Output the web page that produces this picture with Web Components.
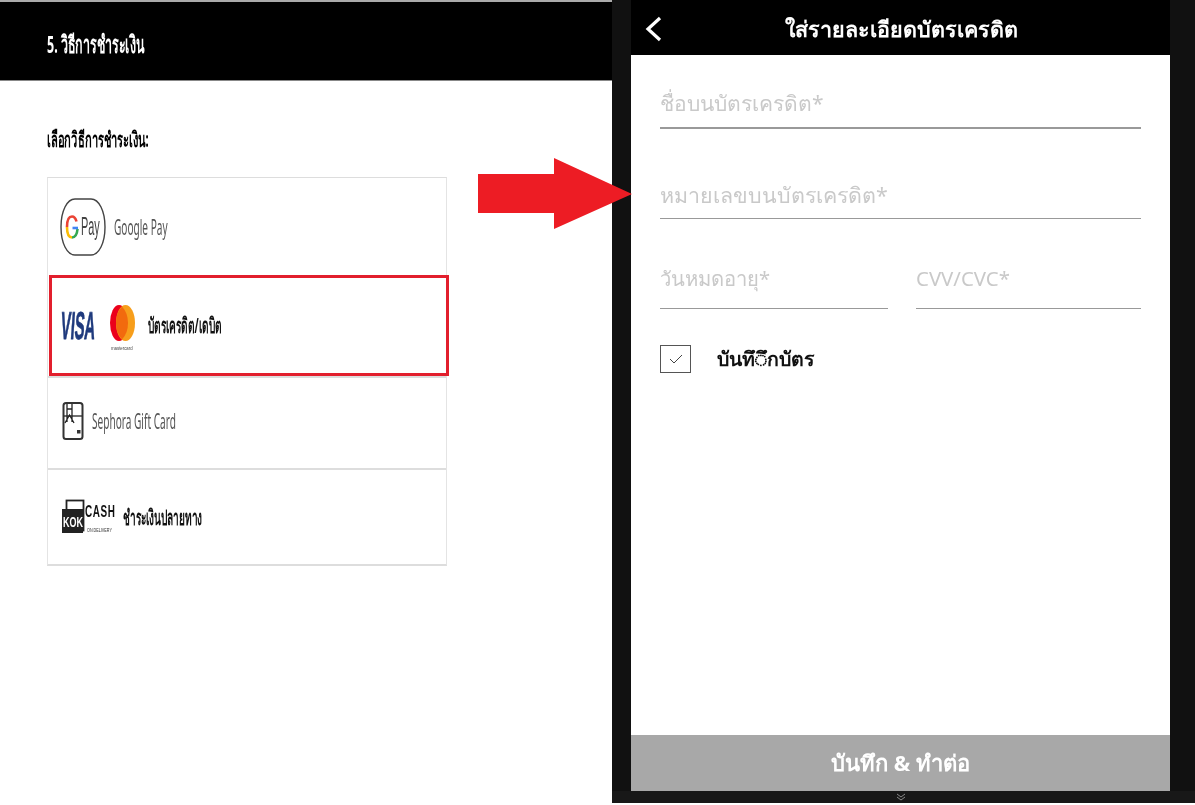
<!DOCTYPE html>
<html lang="th">
<head>
<meta charset="utf-8">
<title>Payment</title>
<style>
  html, body { margin: 0; height: 805px; overflow: hidden; background: #fff; }
  body { font-family: "Noto Sans", "Liberation Sans", sans-serif; }
</style>
</head>
<body>
<checkout-page>
  <payment-panel slot="left" heading="5. วิธีการชำระเงิน" label="เลือกวิธีการชำระเงิน:">
    <pay-option height="97">
      <svg slot="icon" width="46" height="58" viewBox="0 0 46 58" style="margin-left:12px">
        <path d="M15 1H31C39 1 45 13 45 29S39 57 31 57H15C7 57 1 45 1 29S7 1 15 1Z" fill="#fff" stroke="#444" stroke-width="1.4"/>
        <path d="M16.500 23.500C15.500 20 14 18.500 12 18.500C8.500 18.500 7 23.500 7 29" fill="none" stroke="#ea4335" stroke-width="2.600"/>
        <path d="M7 29C7 34.500 8.500 39.500 12 39.500" fill="none" stroke="#fbbc05" stroke-width="2.600"/>
        <path d="M12 39.500C14.500 39.500 17 37 17.500 31" fill="none" stroke="#34a853" stroke-width="2.600"/>
        <path d="M12.500 30H18" fill="none" stroke="#4285f4" stroke-width="2.600"/>
        <text transform="translate(21 37) scale(.42 1)" font-family="Liberation Sans" font-size="26" fill="#444">Pay</text>
      </svg>
      <span class="soft">Google Pay</span>
    </pay-option>
    <pay-option height="101" selected>
      <svg slot="icon" width="82" height="52" viewBox="0 0 82 52" style="margin-left:11px">
        <text transform="translate(1 39) skewX(-4) scale(.38 1)" font-family="Liberation Sans" font-size="39" font-weight="700" fill="#1f3a7d" stroke="#1f3a7d" stroke-width=".8">VISA</text>
        <ellipse cx="60" cy="23" rx="9" ry="18" fill="#eb001b"/>
        <ellipse cx="66.500" cy="23" rx="9.500" ry="18" fill="#f79e1b"/>
        <path d="M63 6.500Q69 13 69 23T63 39.500Q57 33 57 23T63 6.500Z" fill="#f26a0e"/>
        <text transform="translate(52 50) scale(.72 1)" font-family="Liberation Sans" font-size="6" fill="#444">mastercard</text>
      </svg>
      <span class="dark" style="margin-left:-3px">บัตรเครดิต/เดบิต</span>
    </pay-option>
    <pay-option height="92" divided pad="5">
      <svg slot="icon" width="22" height="38" viewBox="0 0 22 38" style="margin-left:14px">
        <rect x="1.500" y="1" width="19" height="36" rx="2.500" fill="#fff" stroke="#333" stroke-width="2"/>
        <path d="M1 14H21" stroke="#333" stroke-width="1.400"/>
        <path d="M5 2V20M10 2V20M5 7H10M3 21L7.500 13L12 21" fill="none" stroke="#222" stroke-width="1.300"/>
        <rect x="15" y="28" width="3.500" height="3.500" fill="#333"/>
      </svg>
      <span class="soft">Sephora Gift Card</span>
    </pay-option>
    <pay-option height="96" divided>
      <svg slot="icon" width="55" height="36" viewBox="0 0 55 36" style="margin-left:14px">
        <rect x="4.500" y="1.500" width="17" height="30" fill="#fff" stroke="#222" stroke-width="1.800"/>
        <rect x="0" y="10" width="21" height="24" fill="#222"/>
        <text transform="translate(1 28) scale(.6 1)" font-family="Liberation Sans" font-size="15" font-weight="700" fill="#fff">KOK</text>
        <text transform="translate(23 18) scale(.62 1)" font-family="Liberation Sans" font-size="16" font-weight="700" letter-spacing="1" fill="#111">CASH</text>
        <text transform="translate(25 33) scale(.62 1)" font-family="Liberation Sans" font-size="6" fill="#333">ON DELIVERY</text>
      </svg>
      <span class="dark" style="margin-left:-4px">ชำระเงินปลายทาง</span>
    </pay-option>
  </payment-panel>
  <flow-arrow slot="arrow"></flow-arrow>
  <card-form slot="right" title="ใส่รายละเอียดบัตรเครดิต" action="บันทึก &amp; ทำต่อ">
    <text-field placeholder="ชื่อบนบัตรเครดิต*" height="74" line="2" size="21" pad="10"></text-field>
    <text-field placeholder="หมายเลขบนบัตรเครดิต*" height="90" line="1" size="21.400" pad="9"></text-field>
    <div style="display:grid;grid-template-columns:228px 225px;gap:28px">
      <text-field placeholder="วันหมดอายุ*" height="90" line="1" size="20.200" pad="16"></text-field>
      <text-field placeholder="CVV/CVC*" height="90" line="1" size="20.400" pad="16"></text-field>
    </div>
    <save-check label="บันทึ◌ึกบัตร"></save-check>
  </card-form>
</checkout-page>

<script>
// page frame: left panel, right phone shot, arrow over both
class CheckoutPage extends HTMLElement {
    constructor() {
        super();
        this.attachShadow({ mode: 'open' }).innerHTML = `
            <style>
                :host { display: flex; position: relative; width: 1195px; height: 805px; overflow: hidden; }
                .left { display: block; width: 612px; flex: none; }
                .right { display: block; width: 583px; flex: none; }
            </style>
            <div class="left"><slot name="left"></slot></div>
            <div class="right"><slot name="right"></slot></div>
            <slot name="arrow"></slot>`;
    }
}

class PaymentPanel extends HTMLElement {
    constructor() {
        super();
        this.attachShadow({ mode: 'open' }).innerHTML = `
            <style>
                :host { display: block; height: 805px; background: #fff; color: #000; filter: blur(.35px); }
                header {
                    height: 81px; background: #000; color: #fff; box-sizing: border-box;
                    border-top: 2px solid #aaa; border-bottom: 1px solid #888;
                    display: flex; align-items: center; padding: 6px 0 0 47px;
                }
                h1, h2 { margin: 0; font-weight: 700; transform-origin: left center; white-space: nowrap; }
                h1 { font-size: 24px; transform: scaleX(.52); }
                h2 { font-size: 21px; transform: scaleX(.53); }
                .label { height: 96px; box-sizing: border-box; display: flex; align-items: center; padding: 20px 47px 0; }
                .list {
                    width: 398px; margin-left: 47px; border: 1px solid #e4e4e4;
                    border-bottom: 2px solid #ddd; border-top: 1px solid #ddd;
                }
            </style>
            <header><h1 id="h"></h1></header>
            <div class="label"><h2 id="l"></h2></div>
            <div class="list"><slot></slot></div>`;
    }
    connectedCallback() {
        this.shadowRoot.getElementById('h').textContent = this.getAttribute('heading');
        this.shadowRoot.getElementById('l').textContent = this.getAttribute('label');
    }
}

class PayOption extends HTMLElement {
    constructor() {
        super();
        this.attachShadow({ mode: 'open' }).innerHTML = `
            <style>
                :host { display: flex; position: relative; align-items: center; gap: 8px; box-sizing: border-box; font-size: 21px; }
                :host([divided]) { border-top: 2px solid #ddd; }
                ::slotted(svg) { flex: none; display: block; }
                .text { display: inline-block; transform: scaleX(.48); transform-origin: left center; white-space: nowrap; }
                ::slotted(span.soft) { color: #555; }
                ::slotted(span.dark) { color: #111; font-weight: 700; }
                .box {
                    display: none; position: absolute; left: 1px; right: -3px; top: 0; bottom: 0;
                    border: 3px solid #e21f2d;
                }
                :host([selected]) .box { display: block; }
            </style>
            <slot name="icon"></slot>
            <span class="text"><slot></slot></span>
            <div class="box"></div>`;
    }
    connectedCallback() {
        this.style.height = this.getAttribute('height') + 'px';
        this.style.paddingBottom = (this.getAttribute('pad') || 0) + 'px';
    }
}

class FlowArrow extends HTMLElement {
    constructor() {
        super();
        this.attachShadow({ mode: 'open' }).innerHTML = `
            <style>:host { position: absolute; left: 477px; top: 158px; width: 155px; height: 72px; }</style>
            <svg width="155" height="72" viewBox="0 0 155 72">
                <path d="M1 16H77V0L155 36L77 71V55H1Z" fill="#ed1c24"/>
            </svg>`;
    }
}

class CardForm extends HTMLElement {
    constructor() {
        super();
        this.attachShadow({ mode: 'open' }).innerHTML = `
            <style>
                :host { display: flex; flex-direction: column; height: 803px; background: #111; filter: blur(.3px); }
                .phone { height: 791px; flex: none; margin: 0 25px 0 19px; display: flex; flex-direction: column; background: #fff; }
                header {
                    height: 55px; flex: none; box-sizing: border-box; background: #000; color: #fff; position: relative;
                    display: flex; align-items: center; justify-content: center;
                    font-size: 21.500px; font-weight: 700; padding: 2px 0 0 2px;
                }
                header svg { position: absolute; left: 13px; top: 16px; }
                main { flex: 1; padding: 0 29px; }
                footer {
                    height: 56px; flex: none; background: #a8a8a8; color: #fff;
                    display: flex; align-items: center; justify-content: center;
                    font-size: 22px; font-weight: 700;
                }
                .strip { flex: 1; display: flex; align-items: center; justify-content: center; background: #181818; padding-right: 6px; }
            </style>
            <div class="phone">
                <header>
                    <svg width="20" height="26" viewBox="0 0 20 26"><path d="M16 2L4 13L16 24" fill="none" stroke="#fff" stroke-width="3.200"/></svg>
                    <span id="t"></span>
                </header>
                <main><slot></slot></main>
                <footer id="a"></footer>
            </div>
            <div class="strip">
                <svg width="10" height="8" viewBox="0 0 10 8"><path d="M1 1L5 4L9 1M1 4L5 7L9 4" fill="none" stroke="#888" stroke-width="1"/></svg>
            </div>`;
    }
    connectedCallback() {
        this.shadowRoot.getElementById('t').textContent = this.getAttribute('title');
        this.shadowRoot.getElementById('a').textContent = this.getAttribute('action');
        this.removeAttribute('title');
    }
}

class TextField extends HTMLElement {
    constructor() {
        super();
        this.attachShadow({ mode: 'open' }).innerHTML = `
            <style>
                :host { display: flex; align-items: flex-end; box-sizing: border-box; border-bottom: 1px solid #999; }
                span { color: #c9c9c9; line-height: 28px; white-space: nowrap; }
            </style>
            <span id="p"></span>`;
    }
    connectedCallback() {
        const p = this.shadowRoot.getElementById('p');
        p.textContent = this.getAttribute('placeholder');
        p.style.fontSize = this.getAttribute('size') + 'px';
        p.style.paddingBottom = this.getAttribute('pad') + 'px';
        this.style.height = this.getAttribute('height') + 'px';
        this.style.borderBottomWidth = this.getAttribute('line') + 'px';
    }
}

class SaveCheck extends HTMLElement {
    constructor() {
        super();
        this.attachShadow({ mode: 'open' }).innerHTML = `
            <style>
                :host { display: flex; align-items: center; gap: 26px; margin-top: 34px; font-size: 19.500px; font-weight: 700; color: #111; }
                .box { width: 29px; height: 26px; border: 1px solid #555; display: flex; align-items: center; justify-content: center; flex: none; }
                span { position: relative; top: 1px; }
            </style>
            <div class="box">
                <svg width="14" height="10" viewBox="0 0 14 10"><path d="M1 5L5 9L13 1" fill="none" stroke="#444" stroke-width="1"/></svg>
            </div>
            <span id="l"></span>`;
    }
    connectedCallback() {
        this.shadowRoot.getElementById('l').textContent = this.getAttribute('label');
    }
}

customElements.define('checkout-page', CheckoutPage);
customElements.define('payment-panel', PaymentPanel);
customElements.define('pay-option', PayOption);
customElements.define('flow-arrow', FlowArrow);
customElements.define('card-form', CardForm);
customElements.define('text-field', TextField);
customElements.define('save-check', SaveCheck);
</script>
</body>
</html>
